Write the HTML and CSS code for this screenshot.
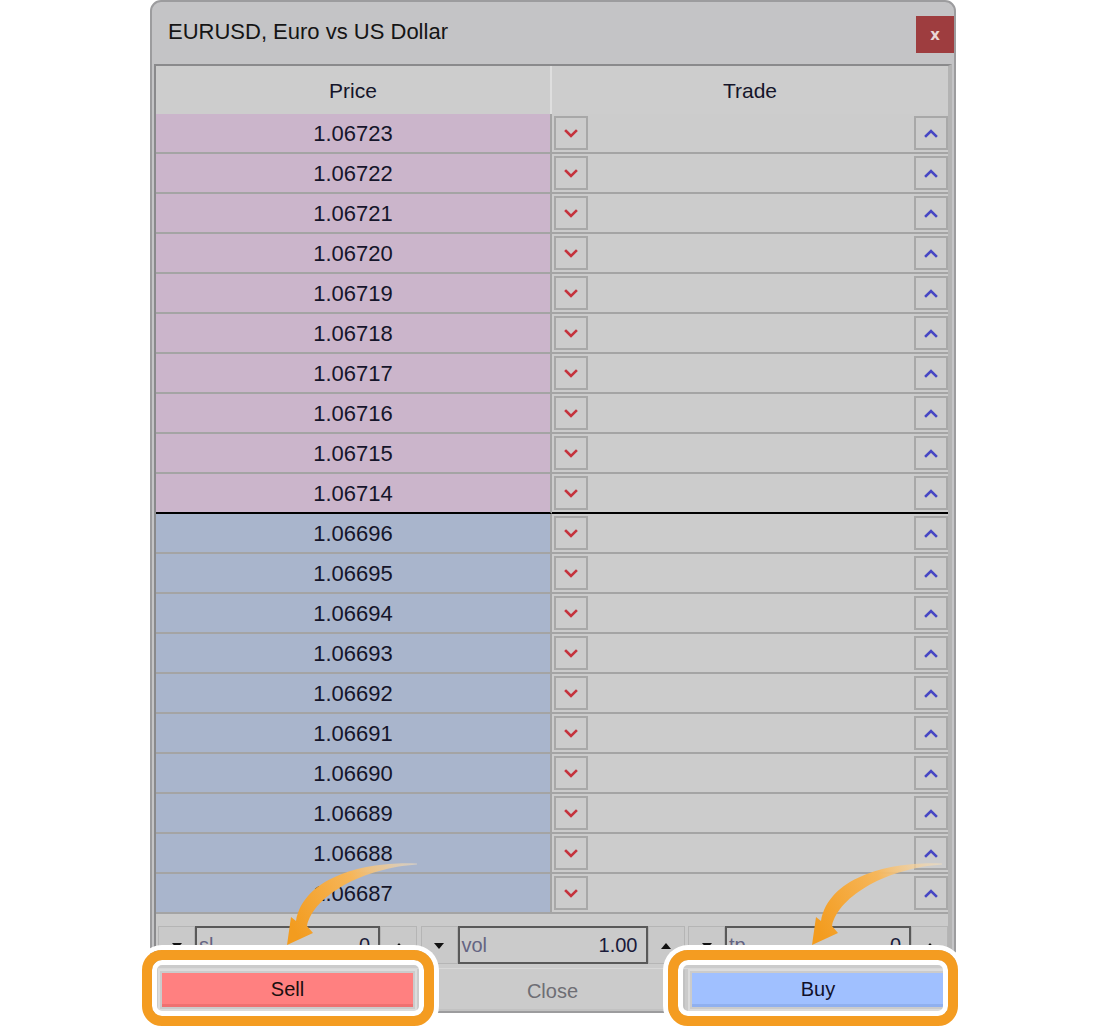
FILE: index.html
```html
<!DOCTYPE html>
<html>
<head>
<meta charset="utf-8">
<link rel="stylesheet" href="styles.css">
</head>
<body>
<div class="window">
  <div class="titlebar">
    <span class="title">EURUSD, Euro vs US Dollar</span>
    <span class="closex">x</span>
  </div>
  <div class="grid">
    <div class="head">
      <div class="h-price">Price</div>
      <div class="h-trade">Trade</div>
    </div>
    <div class="rows">
      <div class="row ask"><div class="price">1.06723</div><div class="trade"><span class="tb"><svg width="14" height="9"><polyline class="dn" points="2,2 7,7 12,2"/></svg></span><span class="tb"><svg width="14" height="9"><polyline class="up" points="2,7 7,2 12,7"/></svg></span></div></div>
      <div class="row ask"><div class="price">1.06722</div><div class="trade"><span class="tb"><svg width="14" height="9"><polyline class="dn" points="2,2 7,7 12,2"/></svg></span><span class="tb"><svg width="14" height="9"><polyline class="up" points="2,7 7,2 12,7"/></svg></span></div></div>
      <div class="row ask"><div class="price">1.06721</div><div class="trade"><span class="tb"><svg width="14" height="9"><polyline class="dn" points="2,2 7,7 12,2"/></svg></span><span class="tb"><svg width="14" height="9"><polyline class="up" points="2,7 7,2 12,7"/></svg></span></div></div>
      <div class="row ask"><div class="price">1.06720</div><div class="trade"><span class="tb"><svg width="14" height="9"><polyline class="dn" points="2,2 7,7 12,2"/></svg></span><span class="tb"><svg width="14" height="9"><polyline class="up" points="2,7 7,2 12,7"/></svg></span></div></div>
      <div class="row ask"><div class="price">1.06719</div><div class="trade"><span class="tb"><svg width="14" height="9"><polyline class="dn" points="2,2 7,7 12,2"/></svg></span><span class="tb"><svg width="14" height="9"><polyline class="up" points="2,7 7,2 12,7"/></svg></span></div></div>
      <div class="row ask"><div class="price">1.06718</div><div class="trade"><span class="tb"><svg width="14" height="9"><polyline class="dn" points="2,2 7,7 12,2"/></svg></span><span class="tb"><svg width="14" height="9"><polyline class="up" points="2,7 7,2 12,7"/></svg></span></div></div>
      <div class="row ask"><div class="price">1.06717</div><div class="trade"><span class="tb"><svg width="14" height="9"><polyline class="dn" points="2,2 7,7 12,2"/></svg></span><span class="tb"><svg width="14" height="9"><polyline class="up" points="2,7 7,2 12,7"/></svg></span></div></div>
      <div class="row ask"><div class="price">1.06716</div><div class="trade"><span class="tb"><svg width="14" height="9"><polyline class="dn" points="2,2 7,7 12,2"/></svg></span><span class="tb"><svg width="14" height="9"><polyline class="up" points="2,7 7,2 12,7"/></svg></span></div></div>
      <div class="row ask"><div class="price">1.06715</div><div class="trade"><span class="tb"><svg width="14" height="9"><polyline class="dn" points="2,2 7,7 12,2"/></svg></span><span class="tb"><svg width="14" height="9"><polyline class="up" points="2,7 7,2 12,7"/></svg></span></div></div>
      <div class="row ask last-ask"><div class="price">1.06714</div><div class="trade"><span class="tb"><svg width="14" height="9"><polyline class="dn" points="2,2 7,7 12,2"/></svg></span><span class="tb"><svg width="14" height="9"><polyline class="up" points="2,7 7,2 12,7"/></svg></span></div></div>
      <div class="row bid"><div class="price">1.06696</div><div class="trade"><span class="tb"><svg width="14" height="9"><polyline class="dn" points="2,2 7,7 12,2"/></svg></span><span class="tb"><svg width="14" height="9"><polyline class="up" points="2,7 7,2 12,7"/></svg></span></div></div>
      <div class="row bid"><div class="price">1.06695</div><div class="trade"><span class="tb"><svg width="14" height="9"><polyline class="dn" points="2,2 7,7 12,2"/></svg></span><span class="tb"><svg width="14" height="9"><polyline class="up" points="2,7 7,2 12,7"/></svg></span></div></div>
      <div class="row bid"><div class="price">1.06694</div><div class="trade"><span class="tb"><svg width="14" height="9"><polyline class="dn" points="2,2 7,7 12,2"/></svg></span><span class="tb"><svg width="14" height="9"><polyline class="up" points="2,7 7,2 12,7"/></svg></span></div></div>
      <div class="row bid"><div class="price">1.06693</div><div class="trade"><span class="tb"><svg width="14" height="9"><polyline class="dn" points="2,2 7,7 12,2"/></svg></span><span class="tb"><svg width="14" height="9"><polyline class="up" points="2,7 7,2 12,7"/></svg></span></div></div>
      <div class="row bid"><div class="price">1.06692</div><div class="trade"><span class="tb"><svg width="14" height="9"><polyline class="dn" points="2,2 7,7 12,2"/></svg></span><span class="tb"><svg width="14" height="9"><polyline class="up" points="2,7 7,2 12,7"/></svg></span></div></div>
      <div class="row bid"><div class="price">1.06691</div><div class="trade"><span class="tb"><svg width="14" height="9"><polyline class="dn" points="2,2 7,7 12,2"/></svg></span><span class="tb"><svg width="14" height="9"><polyline class="up" points="2,7 7,2 12,7"/></svg></span></div></div>
      <div class="row bid"><div class="price">1.06690</div><div class="trade"><span class="tb"><svg width="14" height="9"><polyline class="dn" points="2,2 7,7 12,2"/></svg></span><span class="tb"><svg width="14" height="9"><polyline class="up" points="2,7 7,2 12,7"/></svg></span></div></div>
      <div class="row bid"><div class="price">1.06689</div><div class="trade"><span class="tb"><svg width="14" height="9"><polyline class="dn" points="2,2 7,7 12,2"/></svg></span><span class="tb"><svg width="14" height="9"><polyline class="up" points="2,7 7,2 12,7"/></svg></span></div></div>
      <div class="row bid"><div class="price">1.06688</div><div class="trade"><span class="tb"><svg width="14" height="9"><polyline class="dn" points="2,2 7,7 12,2"/></svg></span><span class="tb"><svg width="14" height="9"><polyline class="up" points="2,7 7,2 12,7"/></svg></span></div></div>
      <div class="row bid"><div class="price">1.06687</div><div class="trade"><span class="tb"><svg width="14" height="9"><polyline class="dn" points="2,2 7,7 12,2"/></svg></span><span class="tb"><svg width="14" height="9"><polyline class="up" points="2,7 7,2 12,7"/></svg></span></div></div>
    </div>
    <div class="panel">
      <div class="controls">
        <div class="group"><span class="spin"><svg width="10" height="6"><polygon points="0,0 10,0 5,6"/></svg></span><div class="field"><span class="lbl">sl</span><span class="val">0</span></div><span class="spin"><svg width="10" height="6"><polygon points="0,6 10,6 5,0"/></svg></span></div>
        <div class="group"><span class="spin"><svg width="10" height="6"><polygon points="0,0 10,0 5,6"/></svg></span><div class="field"><span class="lbl">vol</span><span class="val">1.00</span></div><span class="spin"><svg width="10" height="6"><polygon points="0,6 10,6 5,0"/></svg></span></div>
        <div class="group"><span class="spin"><svg width="10" height="6"><polygon points="0,0 10,0 5,6"/></svg></span><div class="field"><span class="lbl">tp</span><span class="val">0</span></div><span class="spin"><svg width="10" height="6"><polygon points="0,6 10,6 5,0"/></svg></span></div>
      </div>
      <div class="actions">
        <div class="frame"><div class="btn sell">Sell</div></div>
        <div class="frame plain"><div class="btn close">Close</div></div>
        <div class="frame"><div class="btn buy">Buy</div></div>
      </div>
    </div>
  </div>
</div>

<div class="hl hl-sell"></div>
<div class="hl hl-buy"></div>

<svg class="arrow arrow-sell" width="140" height="90" viewBox="0 0 140 90">
  <defs>
    <linearGradient id="ag1" x1="133" y1="4" x2="10" y2="70" gradientUnits="userSpaceOnUse">
      <stop offset="0" stop-color="#fbe3bd" stop-opacity="0.5"/>
      <stop offset="0.45" stop-color="#f6b65a"/>
      <stop offset="1" stop-color="#f39c1f"/>
    </linearGradient>
  </defs>
  <path fill="url(#ag1)" d="M133 3.4 C 85 1, 20 15, 12 61 L 7 57 L 3 85 L 29 73 L 23 66 C 30 35, 80 8, 133 4.6 Z"/>
</svg>
<svg class="arrow arrow-buy" width="140" height="90" viewBox="0 0 140 90">
  <defs>
    <linearGradient id="ag2" x1="133" y1="4" x2="10" y2="70" gradientUnits="userSpaceOnUse">
      <stop offset="0" stop-color="#fbe3bd" stop-opacity="0.5"/>
      <stop offset="0.45" stop-color="#f6b65a"/>
      <stop offset="1" stop-color="#f39c1f"/>
    </linearGradient>
  </defs>
  <path fill="url(#ag2)" d="M133 3.4 C 85 1, 20 15, 12 61 L 7 57 L 3 85 L 29 73 L 23 66 C 30 35, 80 8, 133 4.6 Z"/>
</svg>
</body>
</html>
```

FILE: styles.css
```css
html, body {
  margin: 0;
  padding: 0;
  background: #ffffff;
}
body {
  width: 1100px;
  height: 1030px;
  overflow: hidden;
  font-family: "Liberation Sans", Arial, sans-serif;
  color: #15152a;
}
.window {
  margin-left: 150px;
  width: 806px;
  height: 1013px;
  box-sizing: border-box;
  border: 2px solid #9c9c9e;
  border-radius: 11px 11px 0 0;
  background: #c4c4c6;
  display: flex;
  flex-direction: column;
  padding: 0 2px;
}
.titlebar {
  height: 62px;
  display: flex;
  align-items: flex-start;
  justify-content: space-between;
  flex: none;
}
.title {
  font-size: 22px;
  color: #151515;
  margin-left: 14px;
  margin-top: 19px;
  line-height: 22px;
}
.closex {
  width: 38px;
  height: 37px;
  margin-top: 14px;
  margin-right: -2px;
  background: #9e3d3f;
  color: #ead6d6;
  font-weight: bold;
  font-size: 15px;
  display: flex;
  align-items: center;
  justify-content: center;
  font-family: "DejaVu Sans", sans-serif;
}
.grid {
  flex: 1;
  border-left: 2px solid #8a8a8c;
  border-top: 2px solid #8a8a8c;
  border-right: 4px solid #b3b3b3;
  background: #cbcbcb;
  display: flex;
  flex-direction: column;
}
.head {
  height: 48px;
  flex: none;
  display: flex;
  background: #cdcdcd;
  font-size: 21px;
}
.h-price {
  width: 394px;
  border-right: 2px solid #dedede;
  display: flex;
  align-items: center;
  justify-content: center;
  padding-top: 1px;
}
.h-trade {
  flex: 1;
  display: flex;
  align-items: center;
  justify-content: center;
  padding-top: 1px;
}
.rows {
  display: flex;
  flex-direction: column;
  flex: none;
}
.row {
  height: 40px;
  display: flex;
}
.price {
  border-right: 2px solid #a4a4a4;
  border-bottom: 2px solid #a4a4a4;
  display: flex;
  align-items: center;
  justify-content: center;
  font-size: 22px;
  box-sizing: border-box;
  width: 396px;
  padding-top: 2px;
}
.ask .price { background: #cbb5cb; }
.bid .price { background: #a9b5cc; }
.trade {
  flex: 1;
  background: #cccccc;
  border-bottom: 2px solid #a4a4a4;
  display: flex;
  align-items: center;
  justify-content: space-between;
  padding-left: 2px;
}
.last-ask .price,
.last-ask .trade {
  border-bottom-color: #000000;
}
.tb {
  width: 34px;
  height: 34px;
  box-sizing: border-box;
  border: 2px solid #a8a8a8;
  display: flex;
  align-items: center;
  justify-content: center;
}
.tb svg { display: block; }
.dn, .up {
  fill: none;
  stroke-width: 2.6;
  stroke-linecap: square;
}
.dn { stroke: #c5323c; }
.up { stroke: #4646c4; }
.panel {
  flex: 1;
  padding: 12px 0 0 2px;
  display: flex;
  flex-direction: column;
  background: #cbcbcb;
}
.controls {
  display: grid;
  grid-template-columns: 259px 264px 260px;
  column-gap: 3.5px;
  height: 38px;
}
.group {
  display: flex;
}
.spin {
  width: 37px;
  box-sizing: border-box;
  border: 1px solid #b5b5b5;
  background: #c9c9c9;
  display: flex;
  align-items: center;
  justify-content: center;
  padding-top: 1px;
}
.spin svg { display: block; fill: #111111; }
.field {
  flex: 1;
  border: 2px solid #595959;
  display: flex;
  align-items: center;
  justify-content: space-between;
  padding: 0 8px 0 2px;
  font-size: 20px;
  background: #cbcbcb;
}
.lbl { color: #646482; }
.val { color: #1a1a3a; }
.actions {
  margin-top: 4px;
  display: grid;
  grid-template-columns: 259px 264px 260px;
  column-gap: 3.5px;
  height: 42px;
  border-top: 1px solid #d8d8d8;
}
.frame {
  border: 2px solid #dcdcdc;
  padding: 2px;
  display: flex;
}
.frame.plain {
  border-color: #c2c2c2;
  border-top-color: #cbcbcb;
  padding: 0;
}
.btn {
  flex: 1;
  display: flex;
  align-items: center;
  justify-content: center;
  font-size: 20px;
  padding-top: 2px;
}
.sell {
  background: #ff8080;
  border-bottom: 3px solid #ef7171;
  color: #1a1010;
}
.buy {
  background: #a0c0ff;
  border-bottom: 3px solid #90b0ef;
  color: #10102a;
}
.close {
  color: #6e6e74;
}
.hl {
  position: absolute;
  box-sizing: border-box;
  border: 10px solid #f49c21;
  border-radius: 20px;
  box-shadow: 0 0 0 5px #ffffff, inset 0 0 0 5px #ffffff;
}
.hl-sell {
  left: 142px;
  top: 950px;
  width: 292px;
  height: 76px;
}
.hl-buy {
  left: 668px;
  top: 950px;
  width: 290px;
  height: 76px;
}
.arrow {
  position: absolute;
  top: 860px;
}
.arrow-sell { left: 284px; }
.arrow-buy { left: 809px; }
```
